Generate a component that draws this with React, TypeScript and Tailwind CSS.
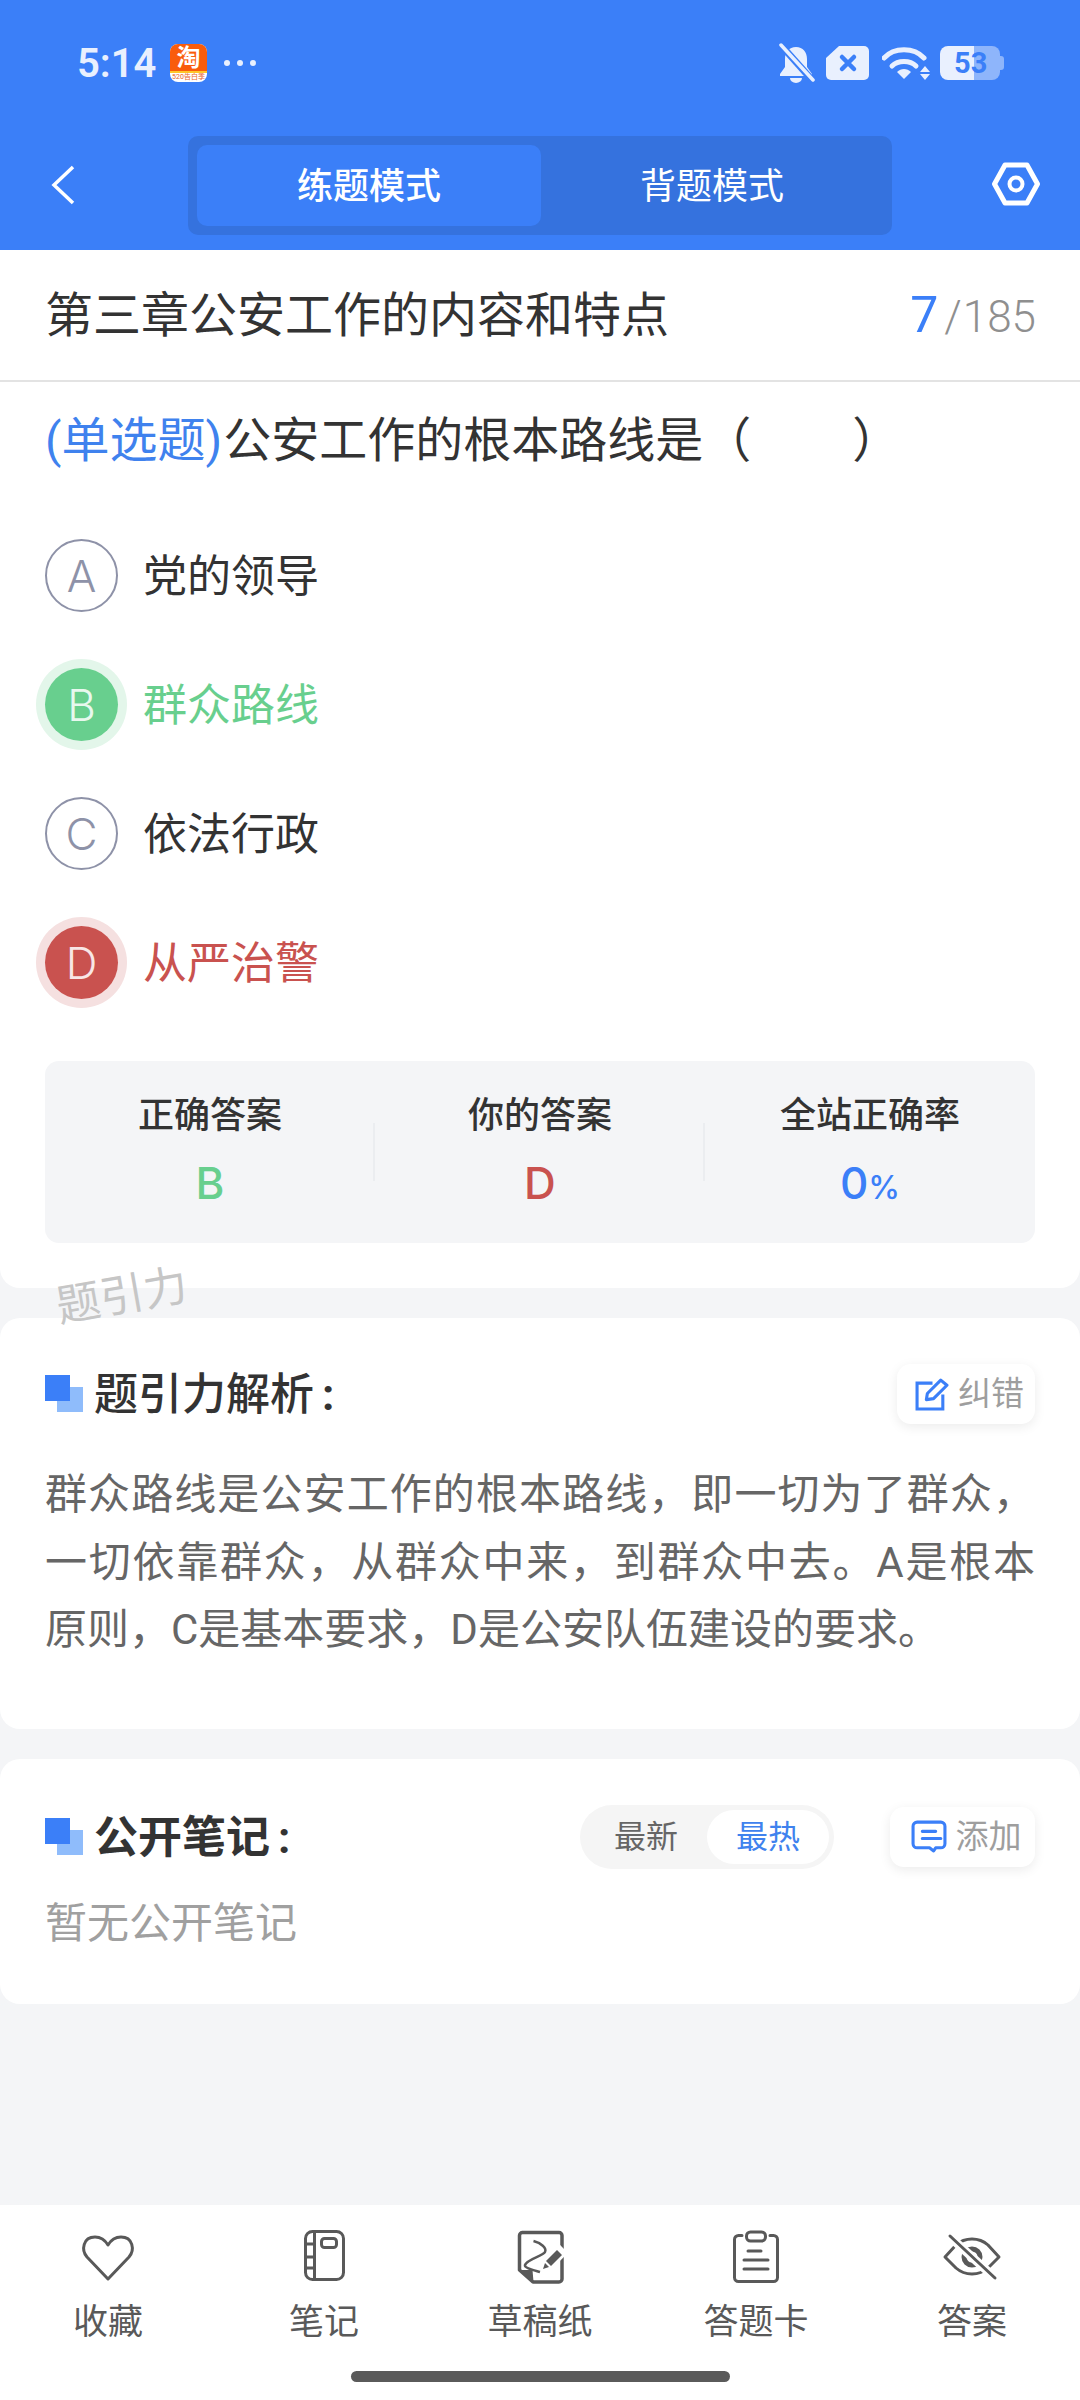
import type { ReactNode } from 'react';

const options = [
  { key: 'A', text: '党的领导', state: 'idle' },
  { key: 'B', text: '群众路线', state: 'right' },
  { key: 'C', text: '依法行政', state: 'idle' },
  { key: 'D', text: '从严治警', state: 'wrong' },
];

function Squares() {
  return (
    <div className="relative w-[38px] h-[38px] shrink-0">
      <div className="absolute left-[12px] top-[12px] w-[26px] h-[25px] bg-[#8fbcfb]" />
      <div className="absolute left-0 top-0 w-[25px] h-[26px] bg-[#3b7ff8]" />
    </div>
  );
}

function StatusBar() {
  return (
    <div className="h-[126px] flex items-center pl-[77px] pr-[76px] text-[#e9f0fe]">
      <span className="pt-[2px] text-[40px] font-semibold leading-none w-[93px]">5:14</span>
      <div className="w-[37px] h-[38px] rounded-[8px] overflow-hidden flex flex-col bg-white">
        <div className="h-[27px] bg-[#f95c0c] flex items-center justify-center text-white text-[24px] font-bold leading-none">淘</div>
        <div className="h-[2px] bg-[#ffc62a]" />
        <div className="flex-1 flex items-center justify-center text-[#e8632a] text-[7px] leading-none whitespace-nowrap">520告白季</div>
      </div>
      <div className="flex gap-[7px] ml-[17px]">
        <div className="w-[6px] h-[6px] rounded-full bg-[#e9f0fe]" />
        <div className="w-[6px] h-[6px] rounded-full bg-[#e9f0fe]" />
        <div className="w-[6px] h-[6px] rounded-full bg-[#e9f0fe]" />
      </div>
      <div className="ml-auto flex items-center">
        <svg width="37" height="40" viewBox="0 0 37 40" fill="none">
          <path d="M18 4c7 0 11 5 11 12v8l5 7v2H2v-2l5-7v-8C7 9 11 4 18 4z" fill="#e9f0fe" />
          <path d="M12 35h12a6 5 0 0 1-12 0z" fill="#e9f0fe" />
          <path d="M2 1l33 37" stroke="#3b7ff8" strokeWidth="7" />
          <path d="M3 2l32 35" stroke="#e9f0fe" strokeWidth="3.5" strokeLinecap="round" />
        </svg>
        <svg className="ml-[11px]" width="43" height="34" viewBox="0 0 43 34" fill="none">
          <path d="M13 0h25a5 5 0 0 1 5 5v24a5 5 0 0 1-5 5H5a5 5 0 0 1-5-5V12z" fill="#e9f0fe" />
          <path d="M16 11l12 12M28 11L16 23" stroke="#3b7ff8" strokeWidth="4.5" strokeLinecap="round" />
        </svg>
        <svg className="ml-[13px]" width="48" height="34" viewBox="0 0 48 34" fill="none">
          <path d="M2 12C12 1 32 1 42 12" stroke="#e9f0fe" strokeWidth="5" strokeLinecap="round" />
          <path d="M10 20c6-6 18-6 24 0" stroke="#e9f0fe" strokeWidth="5" strokeLinecap="round" />
          <path d="M15 26c4-4 10-4 14 0l-7 7z" fill="#e9f0fe" />
          <path d="M43 20l5 6H38zM43 34l-5-6h10z" fill="#e9f0fe" />
        </svg>
        <div className="relative ml-[10px] w-[64px] h-[34px] flex">
          <div className="w-[34px] bg-[#e9f0fe] rounded-l-[8px]" />
          <div className="w-[26px] bg-[#8eb5fb] rounded-r-[8px]" />
          <div className="w-[4px] h-[14px] mt-[10px] bg-[#8eb5fb] rounded-r-[3px]" />
          <span className="absolute left-[14px] top-0 h-[34px] flex items-center text-[#3b7ff8] text-[29px] font-bold leading-none">53</span>
        </div>
      </div>
    </div>
  );
}

function NavRow() {
  return (
    <div className="flex items-start pl-[51px] pr-[40px] mt-[10px]">
      <svg className="mt-[29px]" width="24" height="40" viewBox="0 0 24 40" fill="none">
        <path d="M22 2L3 20l19 18" stroke="white" strokeWidth="3.5" />
      </svg>
      <div className="ml-[113px] w-[704px] h-[99px] bg-[#3572de] rounded-[10px] p-[9px] flex">
        <div className="w-[344px] h-[81px] pt-[2px] bg-[#3b7ff8] rounded-[10px] flex items-center justify-center text-white text-[36px] font-medium">练题模式</div>
        <div className="flex-1 pt-[2px] flex items-center justify-center text-white text-[36px]">背题模式</div>
      </div>
      <svg className="ml-auto mt-[26px]" width="48" height="44" viewBox="0 0 48 44" fill="none">
        <path d="M13 3h22l10.500 19L35 41H13L2.500 22z" stroke="white" strokeWidth="5" strokeLinejoin="round" />
        <circle cx="24" cy="22" r="6.500" stroke="white" strokeWidth="4" />
      </svg>
    </div>
  );
}

function OptionRow({ o }: { o: (typeof options)[number] }) {
  const circle =
    o.state === 'right'
      ? 'bg-[#68cf8e] text-[#e8f8ee] ring-[9px] ring-[#e3f6ea]'
      : o.state === 'wrong'
        ? 'bg-[#c9524f] text-[#f8e6e6] ring-[9px] ring-[#f5e0e0]'
        : 'border-2 border-[#8e92a8] text-[#8e92a8]';
  const label = o.state === 'right' ? 'text-[#68cf8e]' : o.state === 'wrong' ? 'text-[#c9524f]' : 'text-[#333333]';
  return (
    <div className="h-[129px] flex items-center pl-[45px]">
      <div className={`w-[73px] h-[73px] rounded-full flex items-center justify-center font-['Inter'] text-[44px] font-light leading-none ${circle}`}>{o.key}</div>
      <span className={`ml-[25px] pt-[2px] text-[44px] leading-none ${label}`}>{o.text}</span>
    </div>
  );
}

function Stat({ label, children, line }: { label: string; children: ReactNode; line?: boolean }) {
  return (
    <div className="relative flex-1 flex flex-col items-center pt-[33px]">
      <span className="text-[36px] font-medium text-[#333333] leading-[44px]">{label}</span>
      <span className="mt-[22px] font-['Inter'] text-[44px] font-medium leading-[46px]">{children}</span>
      {line && <div className="absolute right-0 top-[62px] w-[2px] h-[58px] bg-[#ebedf0]" />}
    </div>
  );
}

function SmallButton({ icon, text, className }: { icon: ReactNode; text: string; className: string }) {
  return (
    <div className={`h-[60px] pl-[7px] bg-white rounded-[14px] shadow-[0_3px_12px_rgba(0,0,0,0.08)] flex items-center justify-center gap-[9px] text-[33px] text-[#9e9e9e] ${className}`}>
      {icon}
      <span>{text}</span>
    </div>
  );
}

function HeartIcon() {
  return <path d="M30 50L9 28C3 21 5 8 17 8c6 0 10 3 13 8 3-5 7-8 13-8 12 0 14 13 8 20z" strokeLinejoin="round" />;
}

function BookIcon() {
  return (
    <>
      <rect x="11.500" y="2.500" width="38" height="48" rx="7" />
      <path d="M20.500 3v47M11 15h9M11 28h9M11 39h9" />
      <rect x="27.500" y="9.500" width="15" height="9" rx="3" />
    </>
  );
}

function DraftIcon() {
  return (
    <>
      <path d="M12 3.500h37a3 3 0 0 1 3 3V50a3 3 0 0 1-3 3H23L9.500 41V6.500a3 3 0 0 1 3-3z" strokeWidth="3.500" strokeLinejoin="round" />
      <path d="M9.500 41l13 0 1 12z" fill="#595959" stroke="none" />
      <path d="M23.500 12C31 14 37 19 35 23 33 27 17 30 15 36c-1 3 8 5 15 7" strokeWidth="2.500" />
      <path d="M36 38l18-18" stroke="white" strokeWidth="11" />
      <path d="M38.500 34.500l11-11" strokeWidth="7" />
      <path d="M33 40l2-6 4 4z" fill="#595959" stroke="none" />
    </>
  );
}

function ClipboardIcon() {
  return (
    <>
      <path d="M16 6.500h-3.500a4 4 0 0 0-4 4v38a4 4 0 0 0 4 4h35a4 4 0 0 0 4-4v-38a4 4 0 0 0-4-4H44" strokeLinecap="round" />
      <rect x="20.500" y="3" width="19" height="9" rx="4" />
      <path d="M22 22h13M18 31h24M18 40h24" strokeLinecap="round" />
    </>
  );
}

function EyeOffIcon() {
  return (
    <>
      <path d="M3 28L14 16c9-8 23-8 32 0l11 12-11 11c-9 8-23 8-32 0z" strokeLinejoin="round" />
      <circle cx="30" cy="28" r="8" strokeWidth="5" />
      <path d="M7 7l46 42" stroke="white" strokeWidth="9" />
      <path d="M8 7l45 42" strokeLinecap="round" />
    </>
  );
}

const tabs = [
  { label: '收藏', icon: <HeartIcon /> },
  { label: '笔记', icon: <BookIcon /> },
  { label: '草稿纸', icon: <DraftIcon /> },
  { label: '答题卡', icon: <ClipboardIcon /> },
  { label: '答案', icon: <EyeOffIcon /> },
];

export default function App() {
  return (
    <div className="w-[1080px] h-[2400px] bg-[#f4f5f7] flex flex-col overflow-hidden font-['Roboto','Noto_Sans_CJK_SC',sans-serif]">
      <div className="h-[250px] bg-[#3b7ff8] shrink-0">
        <StatusBar />
        <NavRow />
      </div>

      <div className="relative bg-white rounded-b-[20px] pb-[45px]">
        <div className="h-[132px] border-b-2 border-[#e3e3e3] flex items-center justify-between pl-[45px] pr-[44px]">
          <span className="pt-[2px] text-[48px] text-[#333333] leading-none">第三章公安工作的内容和特点</span>
          <div className="flex items-baseline">
            <span className="text-[50px] text-[#3b7ff8] leading-none">7</span>
            <span className="ml-[6px] text-[44px] font-light text-[#8f8f8f] leading-none">/</span>
            <span className="ml-[1px] text-[44px] font-light text-[#8f8f8f] leading-none">185</span>
          </div>
        </div>
        <div className="h-[115px] pt-[2px] flex items-center pl-[45px] text-[48px] text-[#333333] leading-none whitespace-nowrap">
          <span className="text-[#3f82ee]">(单选题)</span>
          <span className="ml-[1px]">公安工作的根本路线是（</span>
          <span className="inline-block w-[101px]" />
          <span>）</span>
        </div>
        <div className="mt-[14px]">
          {options.map(o => (
            <OptionRow key={o.key} o={o} />
          ))}
        </div>
        <div className="mt-[34px] mx-[45px] h-[182px] bg-[#f4f5f7] rounded-[14px] flex">
          <Stat label="正确答案" line><span className="text-[#68cf8e]">B</span></Stat>
          <Stat label="你的答案" line><span className="text-[#c9524f]">D</span></Stat>
          <Stat label="全站正确率">
            <span className="text-[#3b7ff8]">0<span className="text-[32px]">%</span></span>
          </Stat>
        </div>
        <span className="absolute left-[56px] top-[1024px] text-[44px] text-[#c6c6c6] leading-none -rotate-[10deg] whitespace-nowrap z-10">题引力</span>
      </div>

      <div className="mt-[30px] bg-white rounded-[20px] pt-[46px] pb-[65px]">
        <div className="h-[60px] flex items-center pl-[45px] pr-[45px]">
          <Squares />
          <span className="ml-[11px] pt-[2px] text-[44px] font-medium text-[#333333] leading-none">题引力解析<span className="ml-[8px] font-bold">:</span></span>
          <SmallButton
            className="ml-auto w-[138px]"
            text="纠错"
            icon={
              <svg width="34" height="33" viewBox="0 0 33 32" fill="none" stroke="#3b7ff8" strokeWidth="3">
                <path d="M17 5H2v25h25V16" />
                <path d="M11 21l1-6L25 2l6 5-13 13z" strokeLinejoin="round" />
              </svg>
            }
          />
        </div>
        <div className="mt-[37px] w-[1035px] pl-[45px] text-[42px] text-[#666666] leading-[67.500px] text-justify">
          群众路线是公安工作的根本路线，即一切为了群众，一切依靠群众，从群众中来，到群众中去。A是根本原则，C是基本要求，D是公安队伍建设的要求。
        </div>
      </div>

      <div className="mt-[30px] bg-white rounded-[20px] pt-[46px] pb-[50px]">
        <div className="h-[64px] flex items-center pl-[45px] pr-[45px]">
          <Squares />
          <span className="ml-[11px] pt-[2px] text-[44px] font-bold text-[#333333] leading-none">公开笔记<span className="ml-[8px]">:</span></span>
          <div className="ml-auto w-[254px] h-[64px] bg-[#f5f5f5] rounded-full flex items-center pl-[5px] pr-[5px] text-[32px]">
            <span className="w-[122px] text-center text-[#666666]">最新</span>
            <span className="w-[122px] h-[54px] rounded-full bg-white flex items-center justify-center text-[#3f82ee]">最热</span>
          </div>
          <SmallButton
            className="ml-[56px] w-[145px]"
            text="添加"
            icon={
              <svg width="36" height="33" viewBox="0 0 35 32" fill="none" stroke="#3b7ff8" strokeWidth="3">
                <path d="M6 2h23a4 4 0 0 1 4 4v17a4 4 0 0 1-4 4h-5l-2 3-4-3H6a4 4 0 0 1-4-4V6a4 4 0 0 1 4-4z" strokeLinejoin="round" />
                <path d="M11 11h13M11 18h18" strokeLinecap="round" />
              </svg>
            }
          />
        </div>
        <div className="mt-[25px] pl-[45px] text-[42px] text-[#a0a0a0] leading-[60px]">暂无公开笔记</div>
      </div>

      <div className="mt-auto h-[195px] bg-white flex flex-col">
        <div className="grid grid-cols-5 pt-[24px]">
          {tabs.map(t => (
            <div key={t.label} className="flex flex-col items-center">
              <svg width="60" height="56" viewBox="0 0 60 56" fill="none" stroke="#595959" strokeWidth="3">
                {t.icon}
              </svg>
              <span className="mt-[18px] text-[35px] text-[#595959] leading-[40px]">{t.label}</span>
            </div>
          ))}
        </div>
        <div className="mt-auto mb-[18px] mx-auto w-[379px] h-[11px] rounded-full bg-[#5a5a5a]" />
      </div>
    </div>
  );
}
